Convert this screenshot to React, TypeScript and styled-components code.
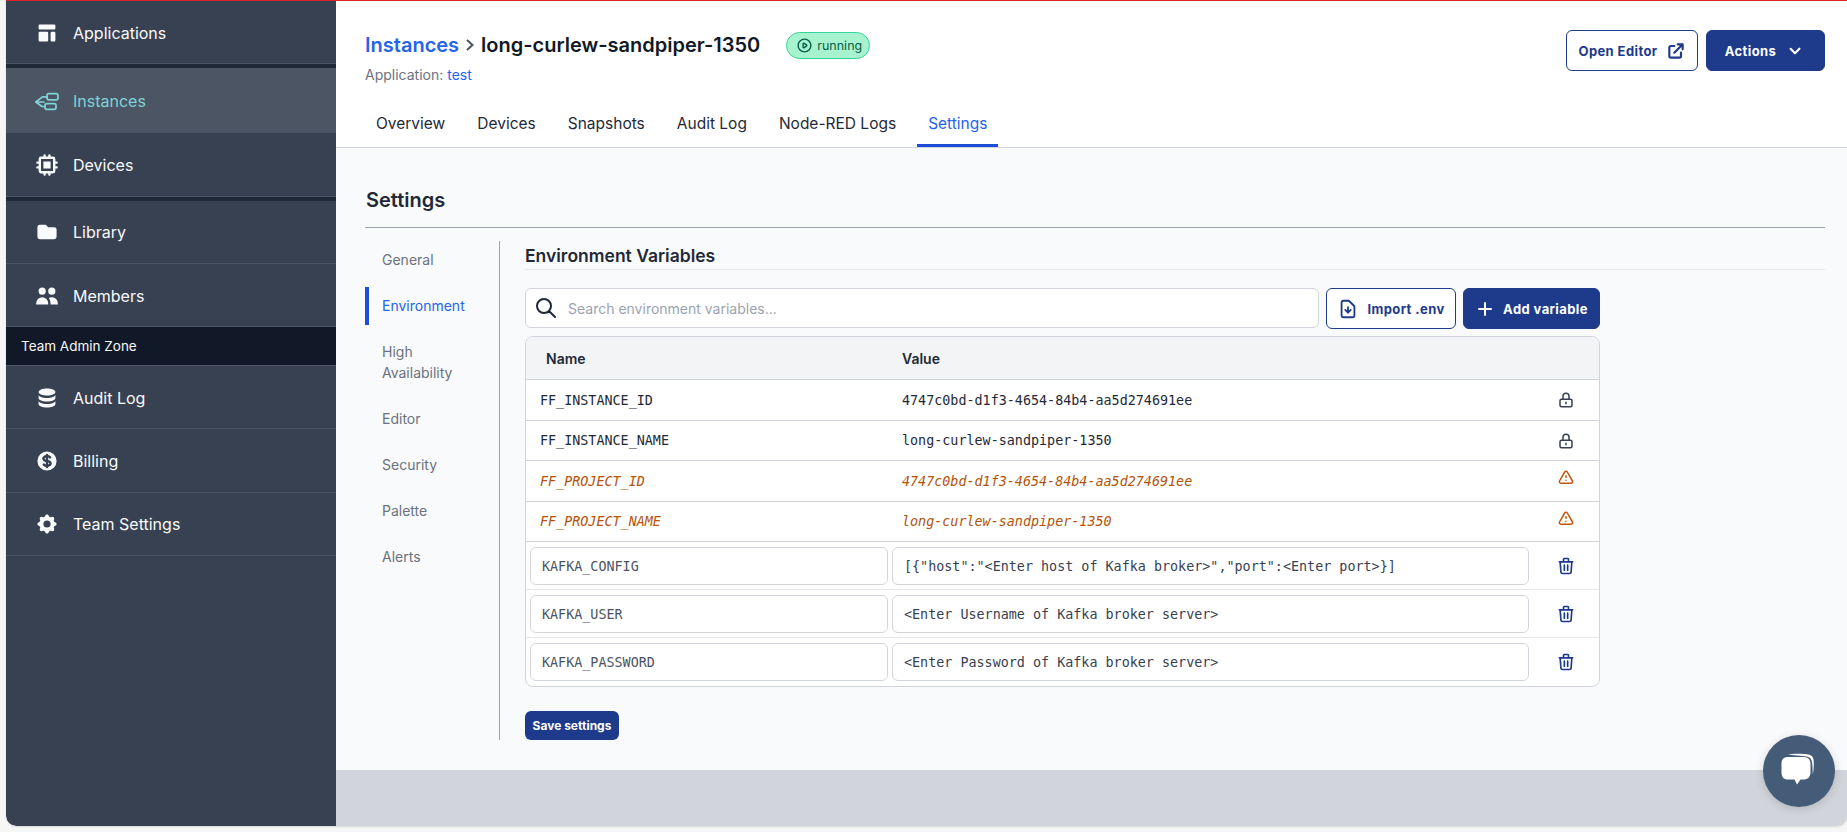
import styled, { createGlobalStyle } from 'styled-components';
import {
  HiChevronDown,
  HiChip,
  HiCog,
  HiCurrencyDollar,
  HiDatabase,
  HiFolder,
  HiOutlineDocumentDownload,
  HiOutlineExclamation,
  HiOutlineExternalLink,
  HiOutlineLockClosed,
  HiOutlinePlay,
  HiOutlineSearch,
  HiOutlineTrash,
  HiPlus,
  HiTemplate,
  HiUsers,
} from 'react-icons/hi';

const GlobalStyle = createGlobalStyle`
  html, body {
    margin: 0;
    padding: 0;
    height: 100%;
    background: #f6f6f6;
    overflow: hidden;
    font-family: Inter, "Noto Sans", sans-serif;
  }
  * { box-sizing: border-box; }
`;

const InstancesIcon = () => (
  <svg width="24" height="24" viewBox="0 0 24 24" fill="none" stroke="currentColor" strokeWidth="1.7">
    <path d="M0.8 13 H9 M0.8 13 L7.5 7.8 H12 M0.8 13 L7 17.5 H10" strokeLinecap="round" strokeLinejoin="round" />
    <rect x="12" y="4.6" width="11" height="6.2" rx="1.8" />
    <rect x="10" y="14.6" width="11" height="5.8" rx="1.8" />
  </svg>
);

const ChatIcon = () => (
  <svg width="40" height="40" viewBox="0 0 40 40">
    <path d="M9 3.5 C13 2.6 24 2.6 29 3.4 C33 4 34.5 6 34.7 10 C35 14 34.7 19 33.8 24 C33.6 18 33.6 13 32.6 9.5 C31.8 6.6 29.5 5.6 26 5.2 C20 4.6 14 4.4 9 3.5 Z" fill="#fff" />
    <path d="M9 6 H24 C29 6 31.5 8.5 31.5 13 V21 C31.5 26 29 28.6 24 28.6 H21.5 L18 33.5 L15.5 28.6 H9 C4.5 28.6 2.5 26 2.5 21 V13 C2.5 8.5 4.5 6 9 6 Z" fill="#fff" />
  </svg>
);

const navTop = [
  { label: 'Applications', icon: <HiTemplate size={24} /> },
  { label: 'Instances', icon: <InstancesIcon />, active: true, hasGap: true },
  { label: 'Devices', icon: <HiChip size={24} /> },
  { label: 'Library', icon: <HiFolder size={24} />, hasGap: true },
  { label: 'Members', icon: <HiUsers size={24} /> },
];
const navAdmin = [
  { label: 'Audit Log', icon: <HiDatabase size={24} /> },
  { label: 'Billing', icon: <HiCurrencyDollar size={24} /> },
  { label: 'Team Settings', icon: <HiCog size={24} /> },
];

const tabs = ['Overview', 'Devices', 'Snapshots', 'Audit Log', 'Node-RED Logs', 'Settings'];
const sections = ['General', 'Environment', 'High Availability', 'Editor', 'Security', 'Palette', 'Alerts'];

const fixedVars = [
  { name: 'FF_INSTANCE_ID', value: '4747c0bd-d1f3-4654-84b4-aa5d274691ee' },
  { name: 'FF_INSTANCE_NAME', value: 'long-curlew-sandpiper-1350' },
  { name: 'FF_PROJECT_ID', value: '4747c0bd-d1f3-4654-84b4-aa5d274691ee', warn: true },
  { name: 'FF_PROJECT_NAME', value: 'long-curlew-sandpiper-1350', warn: true },
];
const editableVars = [
  { name: 'KAFKA_CONFIG', value: '[{"host":"<Enter host of Kafka broker>","port":<Enter port>}]' },
  { name: 'KAFKA_USER', value: '<Enter Username of Kafka broker server>' },
  { name: 'KAFKA_PASSWORD', value: '<Enter Password of Kafka broker server>' },
];

function App() {
  return (
    <Page>
      <GlobalStyle />
      <Sidebar>
        {navTop.map(item => (
          <NavItem key={item.label} $active={item.active} $gap={item.hasGap}>
            <NavIcon>{item.icon}</NavIcon>
            {item.label}
          </NavItem>
        ))}
        <AdminZone>Team Admin Zone</AdminZone>
        {navAdmin.map(item => (
          <NavItem key={item.label}>
            <NavIcon>{item.icon}</NavIcon>
            {item.label}
          </NavItem>
        ))}
      </Sidebar>

      <Main>
        <Header>
          <HeaderTop>
            <div>
              <TitleRow>
                <Crumb>Instances</Crumb>
                <CrumbArrow viewBox="0 0 10 14">
                  <path d="M2 2 L7.5 7 L2 12" fill="none" stroke="currentColor" strokeWidth="2" />
                </CrumbArrow>
                <InstanceName>long-curlew-sandpiper-1350</InstanceName>
                <StatusBadge>
                  <HiOutlinePlay size={17} />
                  running
                </StatusBadge>
              </TitleRow>
              <SubTitle>
                Application: <a>test</a>
              </SubTitle>
            </div>
            <HeaderActions>
              <Button $outline $width={132}>
                Open Editor
                <HiOutlineExternalLink size={20} strokeWidth={2.6} />
              </Button>
              <Button $width={119}>
                Actions
                <HiChevronDown size={22} />
              </Button>
            </HeaderActions>
          </HeaderTop>
          <Tabs>
            {tabs.map(tab => (
              <Tab key={tab} $active={tab === 'Settings'}>
                {tab}
              </Tab>
            ))}
          </Tabs>
        </Header>

        <Content>
          <SettingsTitle>Settings</SettingsTitle>
          <SettingsBody>
            <SideNav>
              {sections.map(section => (
                <SideNavItem key={section} $active={section === 'Environment'}>
                  {section}
                </SideNavItem>
              ))}
            </SideNav>
            <Panel>
              <PanelTitle>Environment Variables</PanelTitle>
              <Toolbar>
                <SearchBox>
                  <HiOutlineSearch size={24} color="#1f2937" />
                  <SearchInput placeholder="Search environment variables..." />
                </SearchBox>
                <Button $outline $width={130}>
                  <HiOutlineDocumentDownload size={22} />
                  Import .env
                </Button>
                <Button $width={137}>
                  <HiPlus size={20} />
                  Add variable
                </Button>
              </Toolbar>

              <Table>
                <HeadRow>
                  <HeadName>Name</HeadName>
                  <HeadValue>Value</HeadValue>
                </HeadRow>
                {fixedVars.map(v => (
                  <TextRow key={v.name} $warn={v.warn}>
                    <NameCell>{v.name}</NameCell>
                    <ValueCell>{v.value}</ValueCell>
                    <ActionCell $lift={v.warn}>
                      {v.warn ? <HiOutlineExclamation size={18} /> : <HiOutlineLockClosed size={18} />}
                    </ActionCell>
                  </TextRow>
                ))}
                {editableVars.map((v, i) => (
                  <InputRow key={v.name} $last={i === editableVars.length - 1}>
                    <VarField>{v.name}</VarField>
                    <VarField $value>{v.value}</VarField>
                    <ActionCell $blue>
                      <HiOutlineTrash size={20} />
                    </ActionCell>
                  </InputRow>
                ))}
              </Table>

              <SaveButton>Save settings</SaveButton>
            </Panel>
          </SettingsBody>
        </Content>
        <Footer />
      </Main>

      <ChatBubble>
        <ChatIcon />
      </ChatBubble>
    </Page>
  );
}

const Page = styled.div`
  position: relative;
  display: flex;
  height: 826px;
  margin-left: 6px;
  border-top: 1px solid #dc2626;
  border-radius: 0 0 10px 10px;
  overflow: hidden;
  box-shadow: 0 1px 2px rgba(0, 0, 0, 0.12);
`;

const Sidebar = styled.nav`
  flex: 0 0 330px;
  background: #374151;
  color: #f9fafb;
  border-bottom-left-radius: 10px;
`;

const NavItem = styled.div<{ $active?: boolean; $gap?: boolean }>`
  display: flex;
  align-items: center;
  gap: 14px;
  height: 63.3px;
  padding: 1px 0 0 29px;
  font-size: 16px;
  border-bottom: 1px solid #4b5563;
  color: ${p => (p.$active ? '#7dd3d8' : '#f9fafb')};
  background: ${p => (p.$active ? '#4b5563' : 'transparent')};
  ${p => p.$gap && 'margin-top: 4px; box-shadow: 0 -4px 0 #1f2937;'}
  ${p => p.$active && 'height: 65px; border-bottom: none; padding-top: 0;'}
`;

const NavIcon = styled.span`
  display: flex;
  width: 24px;
  height: 24px;
`;

const AdminZone = styled.div`
  display: flex;
  align-items: center;
  height: 39px;
  padding-left: 15px;
  font-size: 13.5px;
  background: #111827;
  color: #f9fafb;
  border-bottom: 1px solid #4b5563;
`;

const Main = styled.main`
  flex: 1;
  display: flex;
  flex-direction: column;
  min-width: 0;
`;

const Header = styled.header`
  height: 147px;
  padding: 0 22px 0 29px;
  background: #fff;
  border-bottom: 1px solid #d1d5db;
  display: flex;
  flex-direction: column;
  justify-content: space-between;
`;

const HeaderTop = styled.div`
  display: flex;
  justify-content: space-between;
  padding-top: 29px;
`;

const TitleRow = styled.div`
  display: flex;
  align-items: center;
  height: 30px;
`;

const Crumb = styled.a`
  font-size: 20px;
  font-weight: 600;
  color: #2563eb;
`;

const CrumbArrow = styled.svg`
  width: 10px;
  height: 14px;
  margin: 0 6px 0 6px;
  color: #4b5563;
`;

const InstanceName = styled.h1`
  margin: 0;
  font-size: 20px;
  font-weight: 630;
  color: #111827;
`;

const StatusBadge = styled.span`
  display: flex;
  align-items: center;
  gap: 4px;
  height: 27px;
  margin-left: 26px;
  padding: 0 7px 0 9px;
  border: 1px solid #34d399;
  border-radius: 14px;
  background: #a7f3d0;
  color: #065f46;
  font-size: 12.5px;
`;

const SubTitle = styled.div`
  margin-top: 5px;
  font-size: 14px;
  line-height: 20px;
  color: #6b7280;
  a {
    color: #2563eb;
  }
`;

const HeaderActions = styled.div`
  display: flex;
  gap: 8px;
`;

const Button = styled.button<{ $outline?: boolean; $width: number }>`
  display: inline-flex;
  align-items: center;
  justify-content: center;
  gap: 8px;
  flex: 0 0 auto;
  width: ${p => p.$width}px;
  height: 41px;
  padding: 0;
  border: 1px solid #1e3a8a;
  border-radius: 6px;
  background: ${p => (p.$outline ? '#fff' : '#1e3a8a')};
  color: ${p => (p.$outline ? '#1e3a8a' : '#fff')};
  font-family: Inter, sans-serif;
  font-size: 13px;
  font-weight: 700;
  letter-spacing: 0.4px;
`;

const Tabs = styled.div`
  display: flex;
  gap: 10px;
`;

const Tab = styled.div<{ $active?: boolean }>`
  height: 43px;
  padding: 8px 11px 0;
  font-size: 15.5px;
  line-height: 24px;
  color: ${p => (p.$active ? '#2563eb' : '#1f2937')};
  border-bottom: 3px solid ${p => (p.$active ? '#1d4ed8' : 'transparent')};
`;

const Content = styled.div`
  flex: 1;
  padding: 37px 22px 0 29px;
  background: #f9fafb;
`;

const SettingsTitle = styled.h2`
  margin: 0;
  height: 43px;
  padding-left: 1px;
  font-size: 20px;
  line-height: 30px;
  font-weight: 600;
  color: #1f2937;
  border-bottom: 1px solid #9ca3af;
`;

const SettingsBody = styled.div`
  display: flex;
  margin-top: 13px;
`;

const SideNav = styled.div`
  flex: 0 0 135px;
  display: flex;
  flex-direction: column;
  gap: 8px;
  height: 499px;
  border-right: 1px solid #9ca3af;
`;

const SideNavItem = styled.div<{ $active?: boolean }>`
  padding: 8px 30px 9px 13px;
  font-size: 14px;
  line-height: 21px;
  color: ${p => (p.$active ? '#2563eb' : '#6b7280')};
  border-left: 4px solid ${p => (p.$active ? '#1d4ed8' : 'transparent')};
`;

const Panel = styled.section`
  flex: 1;
  min-width: 0;
  margin-left: 25px;
`;

const PanelTitle = styled.h3`
  margin: 0;
  height: 29px;
  padding-top: 1px;
  font-size: 17.5px;
  line-height: 28px;
  font-weight: 600;
  color: #1f2937;
  border-bottom: 1px solid #e5e7eb;
`;

const Toolbar = styled.div`
  display: flex;
  gap: 7px;
  width: 1075px;
  margin-top: 18px;
`;

const SearchBox = styled.div`
  flex: 1;
  display: flex;
  align-items: center;
  gap: 8px;
  height: 40px;
  padding-left: 8px;
  background: #fff;
  border: 1px solid #d1d5db;
  border-radius: 6px;
`;

const SearchInput = styled.input`
  flex: 1;
  border: 0;
  outline: 0;
  background: transparent;
  font-family: Inter, sans-serif;
  font-size: 14px;
  color: #374151;
  &::placeholder {
    color: #9ca3af;
  }
`;

const Table = styled.div`
  width: 1075px;
  margin-top: 7px;
  background: #fff;
  border: 1px solid #d1d5db;
  border-radius: 8px;
  overflow: hidden;
`;

const HeadRow = styled.div`
  display: grid;
  grid-template-columns: 364px 1fr;
  align-items: center;
  height: 43px;
  background: #f3f4f6;
  border-bottom: 1px solid #d1d5db;
  font-size: 14px;
  font-weight: 600;
  color: #1f2937;
`;

const HeadName = styled.div`
  padding-left: 20px;
`;

const HeadValue = styled.div`
  padding-left: 12px;
`;

const TextRow = styled.div<{ $warn?: boolean }>`
  display: grid;
  grid-template-columns: 364px 1fr 66px;
  align-items: center;
  height: 40.5px;
  padding-top: 1px;
  border-bottom: 1px solid #d1d5db;
  font-family: "DejaVu Sans Mono", "Liberation Mono", monospace;
  font-size: 13.4px;
  color: ${p => (p.$warn ? '#b45309' : '#1f2937')};
  font-style: ${p => (p.$warn ? 'italic' : 'normal')};
`;

const NameCell = styled.div`
  padding-left: 14px;
`;

const ValueCell = styled.div`
  padding-left: 12px;
`;

const ActionCell = styled.div<{ $lift?: boolean; $blue?: boolean }>`
  display: flex;
  justify-content: center;
  margin-top: ${p => (p.$lift ? '-6px' : '0')};
  color: ${p => (p.$lift ? '#c2540a' : p.$blue ? '#1e3a8a' : '#374151')};
`;

const InputRow = styled.div<{ $last?: boolean }>`
  display: grid;
  grid-template-columns: 358px 637px 1fr;
  column-gap: 4px;
  align-items: center;
  height: 48px;
  padding-left: 4px;
  border-bottom: ${p => (p.$last ? 'none' : '1px solid #e5e7eb')};
`;

const VarField = styled.div<{ $value?: boolean }>`
  display: flex;
  align-items: center;
  height: 38px;
  padding: 1px 11px 0;
  border: 1px solid #d1d5db;
  border-radius: 6px;
  background: #fff;
  font-family: "DejaVu Sans Mono", "Liberation Mono", monospace;
  font-size: 13.4px;
  white-space: nowrap;
  color: ${p => (p.$value ? '#374151' : '#4b5563')};
`;

const SaveButton = styled.button`
  display: block;
  width: 94px;
  height: 29px;
  margin-top: 24px;
  padding: 0;
  border: 0;
  border-radius: 6px;
  background: #1e3a8a;
  color: #fff;
  font-family: Inter, sans-serif;
  font-size: 12px;
  font-weight: 700;
`;

const Footer = styled.footer`
  flex: 0 0 56px;
  background: #d1d5db;
`;

const ChatBubble = styled.div`
  position: absolute;
  right: 12px;
  bottom: 19px;
  display: flex;
  align-items: center;
  justify-content: center;
  width: 72px;
  height: 72px;
  border-radius: 50%;
  background: #445c78;
  box-shadow: 0 2px 10px rgba(0, 0, 0, 0.15);
`;

export default App;
